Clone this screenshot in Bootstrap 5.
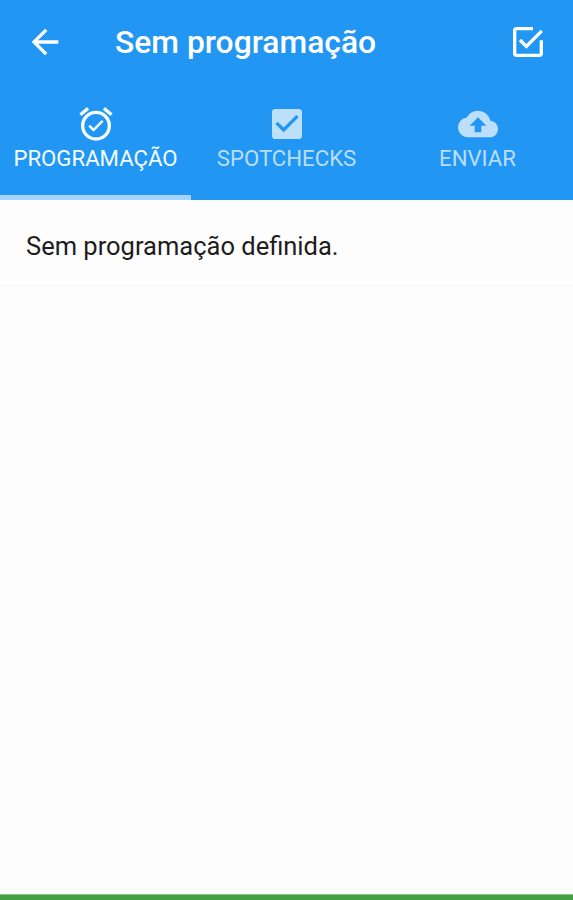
<!DOCTYPE html>
<html lang="pt">
<head>
<meta charset="utf-8">
<meta name="viewport" content="width=device-width, initial-scale=1">
<title>Sem programação</title>
<link rel="stylesheet" href="https://cdn.jsdelivr.net/npm/bootstrap@5.3.0/dist/css/bootstrap.min.css">
<style>
body{font-family:Roboto,sans-serif;background:#fdfdfd;height:900px;overflow:hidden}
.app-head{background:#2196f3;height:200px;color:#fff}
.title-bar{height:84px;padding:0 25px}
.title-bar h1{font-size:31.8px;font-weight:500;line-height:1;margin-left:50px;padding-top:2px}
.tab-strip{height:116px}
.tab-item{width:191px;padding-top:20px;font-size:22.2px;line-height:29px;color:rgba(255,255,255,.7);border-bottom:5px solid transparent;white-space:nowrap}
.tab-item.active{color:#f4fdff;border-bottom-color:#a6d3fa}
.tab-item svg{display:block}
.entry{height:86px;padding:9px 26px 0;font-size:25.5px;line-height:1;color:#1d1d1d;border-bottom:1px solid #f8f8f8}
.foot-line{height:6px;background:#43a047;border-top:1px solid #8fbf8c}
</style>
</head>
<body class="d-flex flex-column">
<header class="app-head d-flex flex-column flex-shrink-0">
<div class="title-bar d-flex align-items-center">
<svg width="40" height="40" viewBox="0 0 24 24" fill="currentColor"><path d="M20 11H7.83l5.59-5.59L12 4l-8 8 8 8 1.41-1.41L7.83 13H20z"/></svg>
<h1 class="mb-0">Sem programação</h1>
<svg class="ms-auto" width="40" height="40" viewBox="0 0 24 24" fill="currentColor"><path d="M7.91 10.08 6.5 11.5 11 16 21 6 19.59 4.58 11 13.17zM19 19H5V5h10V3H5c-1.11 0-2 .89-2 2v14c0 1.1.89 2 2 2h14c1.1 0 2-.9 2-2v-8h-2z"/></svg>
</div>
<nav class="tab-strip d-flex">
<div class="tab-item active d-flex flex-column align-items-center">
<svg width="40" height="40" viewBox="0 0 24 24" fill="currentColor"><path d="M22 5.72l-4.6-3.86-1.29 1.53 4.6 3.86zM7.88 3.39L6.6 1.86 2 5.71l1.29 1.53zM12 4a9 9 0 1 0 0 18 9 9 0 0 0 0-18zm0 16a7 7 0 1 1 0-14 7 7 0 0 1 0 14zm-1.46-5.47L8.41 12.4l-1.06 1.06 3.18 3.18 6-6-1.06-1.06z"/></svg>
<span>PROGRAMAÇÃO</span></div>
<div class="tab-item d-flex flex-column align-items-center">
<svg width="40" height="40" viewBox="0 0 24 24" fill="currentColor"><path d="M19 3H5a2 2 0 0 0-2 2v14a2 2 0 0 0 2 2h14a2 2 0 0 0 2-2V5a2 2 0 0 0-2-2zm-9 14l-5-5 1.41-1.41L10 14.17l7.59-7.59L19 8z"/></svg>
<span>SPOTCHECKS</span></div>
<div class="tab-item d-flex flex-column align-items-center">
<svg width="40" height="40" viewBox="0 0 24 24" fill="currentColor"><path d="M19.35 10.04A7.49 7.49 0 0 0 12 4C9.11 4 6.6 5.64 5.35 8.04A5.994 5.994 0 0 0 0 14c0 3.31 2.69 6 6 6h13c2.76 0 5-2.24 5-5 0-2.64-2.05-4.78-4.65-4.96zM14 13v4h-4v-4H7l5-5 5 5z"/></svg>
<span>ENVIAR</span></div>
</nav>
</header>
<main class="flex-grow-1"><div class="entry d-flex align-items-center">Sem programação definida.</div></main>
<footer class="foot-line flex-shrink-0"></footer>
<script src="https://cdn.jsdelivr.net/npm/bootstrap@5.3.0/dist/js/bootstrap.bundle.min.js"></script>
</body>
</html>
